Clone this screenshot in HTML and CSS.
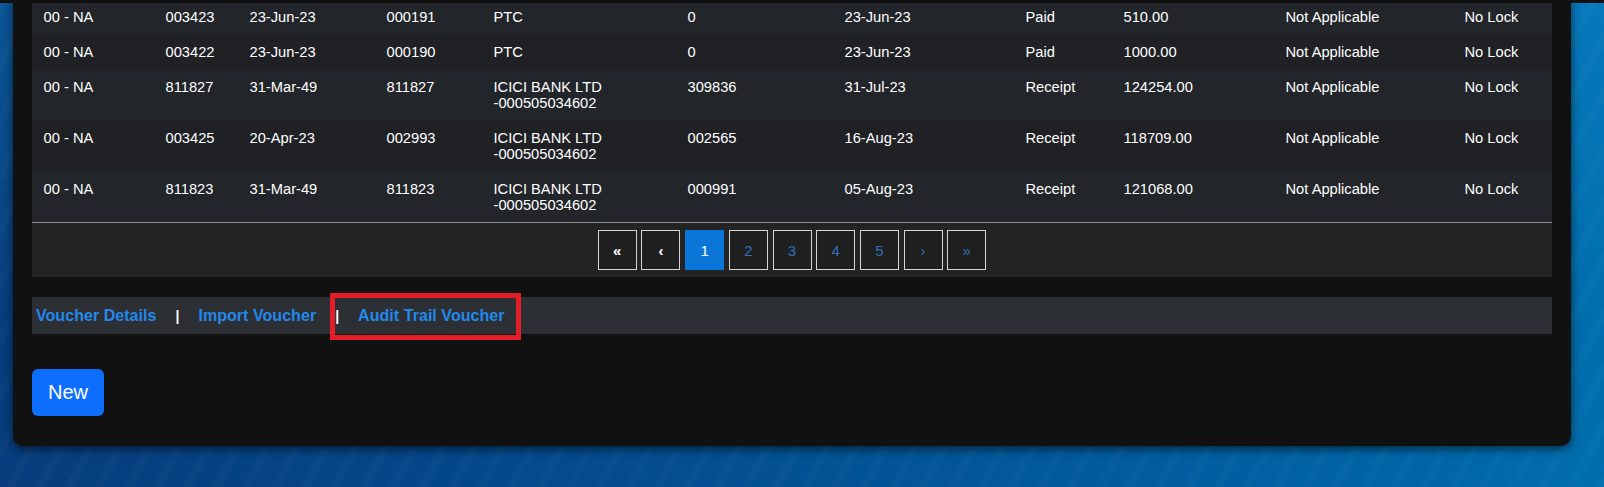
FILE: index.html
```html
<!DOCTYPE html>
<html lang="en">
<head>
<meta charset="utf-8">
<title>Vouchers</title>
<link rel="stylesheet" href="styles.css">
</head>
<body>
<div class="topbar"></div>
<div class="card">
  <table class="vtable">
    <colgroup>
      <col class="c1"><col class="c2"><col class="c3"><col class="c4"><col class="c5"><col class="c6">
      <col class="c7"><col class="c8"><col class="c9"><col class="c10"><col class="c11">
    </colgroup>
    <tbody>
      <tr><td>00 - NA</td><td>003423</td><td>23-Jun-23</td><td>000191</td><td>PTC</td><td>0</td><td>23-Jun-23</td><td>Paid</td><td>510.00</td><td>Not Applicable</td><td>No Lock</td></tr>
      <tr><td>00 - NA</td><td>003422</td><td>23-Jun-23</td><td>000190</td><td>PTC</td><td>0</td><td>23-Jun-23</td><td>Paid</td><td>1000.00</td><td>Not Applicable</td><td>No Lock</td></tr>
      <tr><td>00 - NA</td><td>811827</td><td>31-Mar-49</td><td>811827</td><td>ICICI BANK LTD -000505034602</td><td>309836</td><td>31-Jul-23</td><td>Receipt</td><td>124254.00</td><td>Not Applicable</td><td>No Lock</td></tr>
      <tr><td>00 - NA</td><td>003425</td><td>20-Apr-23</td><td>002993</td><td>ICICI BANK LTD -000505034602</td><td>002565</td><td>16-Aug-23</td><td>Receipt</td><td>118709.00</td><td>Not Applicable</td><td>No Lock</td></tr>
      <tr><td>00 - NA</td><td>811823</td><td>31-Mar-49</td><td>811823</td><td>ICICI BANK LTD -000505034602</td><td>000991</td><td>05-Aug-23</td><td>Receipt</td><td>121068.00</td><td>Not Applicable</td><td>No Lock</td></tr>
    </tbody>
  </table>
  <div class="pager">
    <a class="pg pg-ctrl">«</a>
    <a class="pg pg-ctrl">‹</a>
    <a class="pg active">1</a>
    <a class="pg">2</a>
    <a class="pg">3</a>
    <a class="pg">4</a>
    <a class="pg">5</a>
    <a class="pg">›</a>
    <a class="pg">»</a>
  </div>
  <div class="links">
    <a href="#">Voucher Details</a>
    <span class="sep">|</span>
    <a href="#">Import Voucher</a>
    <span class="hl"><span class="sep">|</span><a href="#">Audit Trail Voucher</a></span>
  </div>
  <div class="actions">
    <button class="btn-new" type="button">New</button>
  </div>
</div>
</body>
</html>
```

FILE: styles.css
```css
html, body {
  margin: 0;
  height: 487px;
  overflow: hidden;
}

body {
  font-family: "Liberation Sans", Arial, sans-serif;
  background:
    repeating-linear-gradient(118deg, rgba(255,255,255,0.018) 0 8px, rgba(255,255,255,0) 8px 26px),
    linear-gradient(180deg, rgba(20,150,220,0.28) 0%, rgba(0,0,0,0) 65%),
    linear-gradient(90deg, #073d7c 0%, #04488a 30%, #025698 60%, #0066a7 90%, #006eae 100%);
}

.topbar {
  position: fixed;
  top: 0;
  left: 0;
  right: 0;
  height: 3px;
  background: #111;
  z-index: 10;
}

.card {
  margin: -1px 33px 0 13px;
  background: #111;
  border-radius: 0 0 10px 10px;
  padding: 0 19px 30px;
  box-shadow: 0 3px 10px rgba(0, 0, 0, 0.6);
}

.vtable {
  width: 100%;
  border-collapse: collapse;
  table-layout: fixed;
  color: #fff;
  font-size: 14.7px;
  line-height: 16px;
}

.vtable td {
  padding: 9.5px 12px 9.5px 11.5px;
  vertical-align: top;
}

.vtable tr:nth-child(odd) td { background: #222529; }
.vtable tr:nth-child(even) td { background: #1f2125; }

.c1 { width: 122px; }
.c2 { width: 84px; }
.c3 { width: 137px; }
.c4 { width: 107px; }
.c5 { width: 194px; }
.c6 { width: 157px; }
.c7 { width: 181px; }
.c8 { width: 98px; }
.c9 { width: 162px; }
.c10 { width: 179px; }
.c11 { width: 99px; }

.pager {
  border-top: 1px solid #8c8c8c;
  background: #232323;
  padding: 7px 0;
  display: flex;
  justify-content: center;
  gap: 4.7px;
}

.pg {
  width: 39px;
  height: 40px;
  box-sizing: border-box;
  border: 1px solid #d6d6d6;
  background: #1f1f1f;
  color: #2f6fba;
  display: flex;
  align-items: center;
  justify-content: center;
  font-size: 15px;
}

.pg-ctrl {
  color: #fff;
  font-weight: bold;
}

.pg.active {
  background: #0a76d8;
  border-color: #0a76d8;
  color: #fff;
}

.links {
  margin-top: 20px;
  height: 37px;
  background: #2c3035;
  display: flex;
  align-items: center;
  gap: 19px;
  padding-left: 4px;
  font-size: 16px;
  font-weight: bold;
}

.links a {
  color: #2189ec;
  text-decoration: none;
  letter-spacing: 0.05px;
}

.sep {
  color: #fff;
  font-size: 14px;
}

.hl {
  position: relative;
  display: flex;
  align-items: center;
  gap: 19px;
  align-self: stretch;
}

.hl::after {
  content: "";
  position: absolute;
  left: -5px;
  right: -16.5px;
  top: -4.5px;
  bottom: -6px;
  border: 5px solid #e41e26;
}

.actions {
  margin-top: 35px;
}

.btn-new {
  height: 47px;
  padding: 0 16px;
  background: #0d6efd;
  color: #fff;
  border: 0;
  border-radius: 6px;
  font-family: "Liberation Sans", Arial, sans-serif;
  font-size: 20px;
}
```
